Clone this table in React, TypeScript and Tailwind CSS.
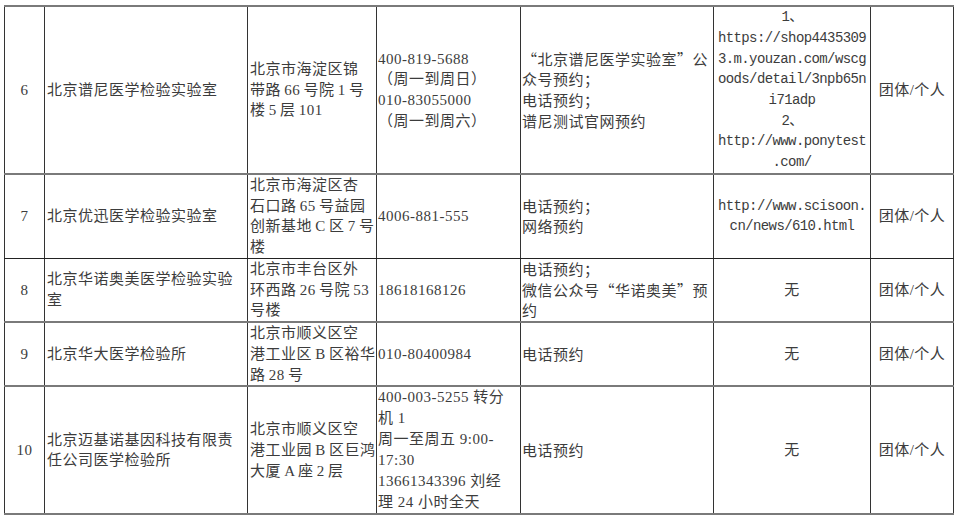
import React from "react";

type Row = {
  no: string;
  name: string[];
  address: string[];
  phone: string[];
  method: string[];
  url: string[];
  scope: string;
  height: string;
  bottom: string;
};

const rows: Row[] = [
  {
    no: "6",
    name: ["北京谱尼医学检验实验室"],
    address: ["北京市海淀区锦", "带路 66 号院 1 号", "楼 5 层 101"],
    phone: ["400-819-5688", "（周一到周日）", "010-83055000", "（周一到周六）"],
    method: ["“北京谱尼医学实验室”公", "众号预约；", "电话预约；", "谱尼测试官网预约"],
    url: [
      "1、",
      "https://shop4435309",
      "3.m.youzan.com/wscg",
      "oods/detail/3npb65n",
      "i71adp",
      "2、",
      "http://www.ponytest",
      ".com/",
    ],
    scope: "团体/个人",
    height: "h-[168px]",
    bottom: "border-b-2 border-b-[#7a7a7a]",
  },
  {
    no: "7",
    name: ["北京优迅医学检验实验室"],
    address: ["北京市海淀区杏", "石口路 65 号益园", "创新基地 C 区 7 号", "楼"],
    phone: ["4006-881-555"],
    method: ["电话预约；", "网络预约"],
    url: ["http://www.scisoon.", "cn/news/610.html"],
    scope: "团体/个人",
    height: "h-[84px]",
    bottom: "border-b border-b-[#222]",
  },
  {
    no: "8",
    name: ["北京华诺奥美医学检验实验", "室"],
    address: ["北京市丰台区外", "环西路 26 号院 53", "号楼"],
    phone: ["18618168126"],
    method: ["电话预约；", "微信公众号“华诺奥美”预", "约"],
    url: ["无"],
    scope: "团体/个人",
    height: "h-[64px]",
    bottom: "border-b-2 border-b-[#7a7a7a]",
  },
  {
    no: "9",
    name: ["北京华大医学检验所"],
    address: ["北京市顺义区空", "港工业区 B 区裕华", "路 28 号"],
    phone: ["010-80400984"],
    method: ["电话预约"],
    url: ["无"],
    scope: "团体/个人",
    height: "h-[63px]",
    bottom: "border-b-2 border-b-[#7a7a7a]",
  },
  {
    no: "10",
    name: ["北京迈基诺基因科技有限责", "任公司医学检验所"],
    address: ["北京市顺义区空", "港工业园 B 区巨鸿", "大厦 A 座 2 层"],
    phone: [
      "400-003-5255 转分",
      "机 1",
      "周一至周五 9:00-",
      "17:30",
      "13661343396 刘经",
      "理 24 小时全天",
    ],
    method: ["电话预约"],
    url: ["无"],
    scope: "团体/个人",
    height: "h-[128px]",
    bottom: "border-b-2 border-b-[#7a7a7a]",
  },
];

const serif = "font-['Liberation_Serif','Noto_Sans_CJK_SC',serif]";
const cjk = "font-['Noto_Sans_CJK_SC',sans-serif]";
const mono = "font-['Liberation_Mono','Noto_Sans_CJK_SC',monospace]";

const Lines = ({ items }: { items: string[] }) => (
  <>
    {items.map((line, i) => (
      <div key={i} className="whitespace-nowrap">
        {line}
      </div>
    ))}
  </>
);

export default function App() {
  return (
    <div className="w-[957px] h-[518px] bg-white pl-[4px] pt-[5px] overflow-hidden">
      <table
        className={`w-[949px] table-fixed border-collapse text-[15px] tracking-[0.5px] leading-[20.7px] text-[#3c3c3c] ${serif}`}
      >
        <colgroup>
          <col className="w-[40px]" />
          <col className="w-[203px]" />
          <col className="w-[129px]" />
          <col className="w-[144px]" />
          <col className="w-[193px]" />
          <col className="w-[157px]" />
          <col className="w-[83px]" />
        </colgroup>
        <tbody>
          {rows.map((r, idx) => {
            const cell = `border-x border-x-[#333] ${r.bottom} ${
              idx === 0 ? "border-t-2 border-t-[#7a7a7a]" : ""
            } align-middle overflow-hidden`;
            return (
              <tr key={r.no} className={r.height}>
                <td className={`${cell} text-center`}>{r.no}</td>
                <td className={`${cell} pl-[2px]`}>
                  <Lines items={r.name} />
                </td>
                <td className={`${cell} pl-[2px] [word-spacing:-1px]`}>
                  <Lines items={r.address} />
                </td>
                <td
                  className={`${cell} pl-[1px] ${
                    r.phone.length > 4 ? "leading-[21px]" : ""
                  }`}
                >
                  <Lines items={r.phone} />
                </td>
                <td className={`${cell} pl-[1px] ${cjk}`}>
                  <Lines items={r.method} />
                </td>
                <td
                  className={`${cell} text-center ${
                    r.url[0] === "无"
                      ? ""
                      : `${mono} text-[14px] tracking-[-0.6px]`
                  }`}
                >
                  <Lines items={r.url} />
                </td>
                <td className={`${cell} text-center`}>{r.scope}</td>
              </tr>
            );
          })}
        </tbody>
      </table>
    </div>
  );
}
